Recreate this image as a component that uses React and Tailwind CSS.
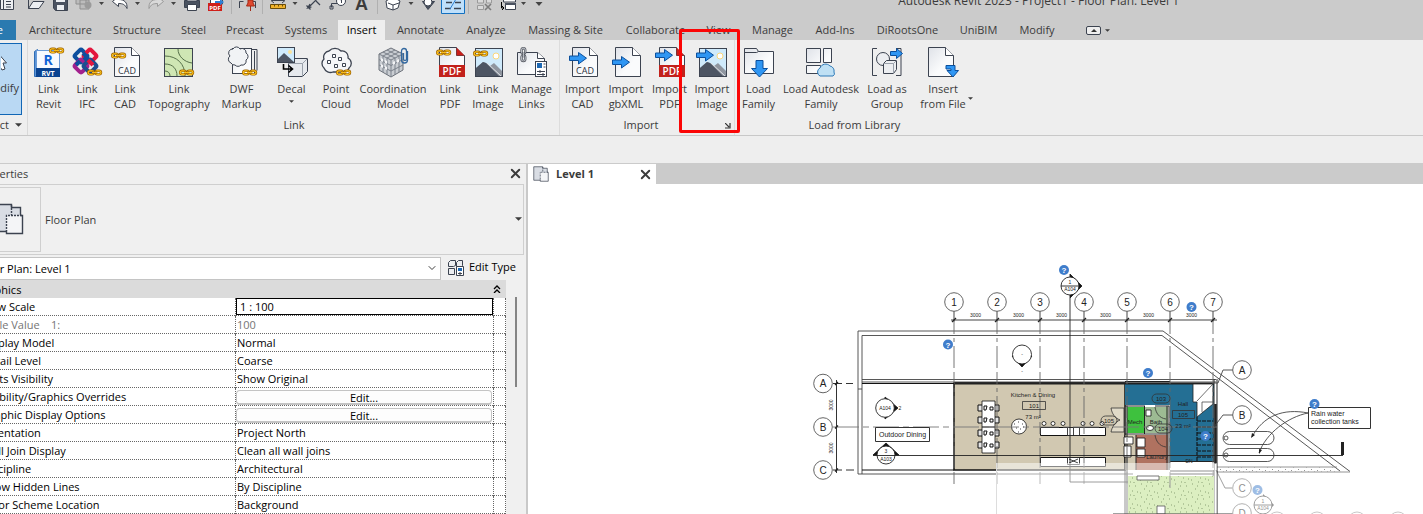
import { X, ChevronDown } from 'lucide-react'

const INK = '#3c4350'

function Caret({ className = 'w-[7px] h-1' }) {
  return (
    <svg viewBox="0 0 8 4" className={className} aria-hidden="true">
      <path d="M0 0h8L4 4z" fill="#3c3c3c" />
    </svg>
  )
}

function Chain({ x, y, dark }) {
  const outer = dark ? '#4b4f57' : '#9a5f00'
  const inner = dark ? '#b9bdc4' : '#fcc21b'
  return (
    <g transform={`translate(${x} ${y})`} fill="none">
      <rect x="1.2" y="1.8" width="5.6" height="3.6" rx="1.8" stroke={outer} strokeWidth="2.4" />
      <rect x="8.4" y="1.8" width="5.6" height="3.6" rx="1.8" stroke={outer} strokeWidth="2.4" />
      <rect x="1.2" y="1.8" width="5.6" height="3.6" rx="1.8" stroke={inner} strokeWidth="1.2" />
      <rect x="8.4" y="1.8" width="5.6" height="3.6" rx="1.8" stroke={inner} strokeWidth="1.2" />
      <path d="M5 3.6h5.2" stroke={outer} strokeWidth="2.4" />
      <path d="M5 3.6h5.2" stroke={inner} strokeWidth="1.1" />
    </g>
  )
}

function Arrow({ x, y }) {
  return (
    <path
      transform={`translate(${x} ${y})`}
      d="M.5 4h9V.5l8 5.7-8 5.8V8.5h-9z"
      fill="#2f96f3"
      stroke="#0b4f9c"
      strokeWidth="1"
    />
  )
}

function Sheet({ children }) {
  return (
    <>
      <path d="M5.5 1.5h17l8 8v21h-25z" fill="url(#paper)" stroke={INK} />
      <path d="M22.5 1.5v8h8" fill="#fff" stroke={INK} />
      {children}
    </>
  )
}

function Tag({ children, x = 18, y = 27.5, size = 9, fill = '#2b313c', weight = 'normal' }) {
  return (
    <text x={x} y={y} fontSize={size} fill={fill} fontWeight={weight} textAnchor="middle" fontFamily="Open Sans, sans-serif">
      {children}
    </text>
  )
}

function Photo() {
  return (
    <>
      <rect x="3.5" y="2.5" width="27" height="28" fill="#cfeafb" stroke={INK} />
      <circle cx="24" cy="10" r="3" fill="#fff" stroke="#fbd77c" />
      <path d="M4 22l7-6 3 1 4 3 4-3 8 8v5H4z" fill="#8f959f" />
      <path d="M4 22l7-6 3 1 13 13H4z" fill="#4d5563" />
      <path d="M15 17l14 13" stroke="#dfe2e6" />
    </>
  )
}

function PdfSheet() {
  return (
    <Sheet>
      <path d="M22.5 1.5l8 8h-8z" fill="#c9201a" />
      <rect x="5" y="19" width="26" height="12" fill="#c2211b" />
      <Tag y="28.5" size="10" fill="#fff" weight="600">PDF</Tag>
    </Sheet>
  )
}

const icons = {
  revit: (
    <>
      <path d="M1.5 5.5l3-2v27h-3z" fill="#5c95d8" stroke="#2f6cb5" />
      <rect x="3.5" y="4.5" width="23" height="20" fill="#f7faff" stroke="#6c9bd6" />
      <Tag x="15" y="19" size="14" fill="#0f62d6" weight="bold">R</Tag>
      <rect x="3" y="22" width="24" height="9" fill="#0a4391" />
      <Tag x="15" y="29.5" size="7" fill="#fff" weight="bold">RVT</Tag>
      <Chain x="16" y="1" />
    </>
  ),
  ifc: (
    <>
      <g fill="none" strokeWidth="4">
        <rect x="5" y="5" width="10" height="10" rx="2" transform="rotate(45 10 10)" stroke="#0d4f9e" />
        <rect x="14" y="5" width="10" height="10" rx="2" transform="rotate(45 19 10)" stroke="#e3173e" />
        <rect x="5" y="15" width="10" height="10" rx="2" transform="rotate(45 10 20)" stroke="#a3218e" />
        <rect x="14" y="15" width="10" height="10" rx="2" transform="rotate(45 19 20)" stroke="#1d4d8f" />
        <path d="M12 7l4 4M13 14l4-4M5 19l4-4" stroke="#0d4f9e" />
        <path d="M17 14l5 5" stroke="#e3173e" />
      </g>
      <Chain x="16" y="23" />
    </>
  ),
  cadLink: (
    <>
      <Sheet><Tag>CAD</Tag></Sheet>
      <Chain x="2" y="6" />
    </>
  ),
  topo: (
    <>
      <rect x="1.5" y="2.5" width="28" height="28" fill="#cfe6b4" stroke={INK} />
      <path d="M2 10c12 0 20 8 20 20M2 18c8 0 12 5 12 12M2 25c3 0 5 2 5 5M15 3c0 7 6 13 14 14" fill="none" stroke="#56704a" />
      <Chain x="16" y="23" />
    </>
  ),
  dwf: (
    <>
      <path d="M28.5 5v22M26 3.5h5v21" fill="none" stroke={INK} />
      <rect x="6.5" y="2.5" width="19" height="25" fill="url(#paper)" stroke={INK} />
      <path d="M5 17a4 4 0 0 1-1-7 4 4 0 0 1 3-7 4 4 0 0 1 7 0 4 4 0 0 1 6 4 4 4 0 0 1 0 7 4 4 0 0 1-5 5 4 4 0 0 1-6 0 4 4 0 0 1-4-2z" fill="#f1f3f5" stroke={INK} />
      <Chain x="16" y="23" />
    </>
  ),
  decal: (
    <>
      <path d="M12.5 17.5l5-5h14v13l-5 5h-14z" fill="#e6e9ed" stroke={INK} />
      <path d="M12.5 17.5h14v13M26.5 17.5l5-5" fill="none" stroke="#9aa1ab" />
      <rect x="1.5" y="1.5" width="17" height="15" fill="#cfeafb" stroke={INK} />
      <path d="M2 13l6-6 10 9H2z" fill="#4d5563" />
      <circle cx="14" cy="6" r="2" fill="#fbe29a" />
      <path d="M7.5 18v5h8M12.5 19.5l4 3.5-4 3.5" fill="none" stroke="#000" strokeWidth="1.6" />
    </>
  ),
  point: (
    <>
      <path d="M4 22a6 6 0 0 1 0-9 6 6 0 0 1 5-8 8 8 0 0 1 12 0 6 6 0 0 1 7 7 6 6 0 0 1 1 10 6 6 0 0 1-6 4H13a7 7 0 0 1-9-4z" fill="#f5f6f8" stroke={INK} strokeWidth="1.3" />
      <path d="M12.5 8.5h3v3h-3zM18.5 11.5h3v3h-3zM7.5 14.5h3v3h-3zM14.5 18.5h3v3h-3zM22.5 17.5h3v3h-3z" fill="#fff" stroke={INK} />
      <Chain x="16" y="23" />
    </>
  ),
  coord: (
    <>
      <path d="M2 8l12-6 12 6v16l-12 7-12-7z" fill="#c9cdd2" stroke="#6b7079" />
      <path d="M2 8l12 6 12-6M14 14v17M2 13.5l12 6 12-6M2 19l12 6 12-6M6 10v16M10 12v17M18 12v17M22 10v16M6 6l12 6M10 4l12 6M22 6l-12 6M18 4L6 10" fill="none" stroke="#7b818b" />
      <path d="M4 12l2 1v3l-2-1zM8 14l2 1v3l-2-1zM16 16l2-1v3l-2 1zM20 14l2-1v3l-2 1zM4 18l2 1v3l-2-1zM8 20l2 1v3l-2-1z" fill="#f3f4f6" />
      <path d="M30.5 5v9a3 3 0 0 1-6 0V5a2.5 2.5 0 0 1 5 0v8a1.4 1.4 0 0 1-3 0V7" fill="none" stroke="#33689f" strokeWidth="1.3" />
    </>
  ),
  pdfLink: (
    <>
      <PdfSheet />
      <Chain x="2" y="3" />
    </>
  ),
  imageLink: (
    <>
      <Photo />
      <Chain x="1" y="4" />
    </>
  ),
  manage: (
    <>
      <path d="M1.5 6.5h20l7 6v16h-27z" fill="url(#paper)" stroke={INK} />
      <path d="M21.5 6.5v6h7" fill="#fff" stroke={INK} />
      <rect x="19.5" y="15.5" width="11" height="15" fill="#fff" stroke={INK} />
      <rect x="21" y="17" width="5" height="5" fill="#1d68b3" />
      <path d="M27.5 18h2M27.5 21h2M21 25.5h8M21 28.5h8M24 24v3M27 27v3" stroke={INK} />
      <g transform="rotate(90 8 8)"><Chain x="1" y="5" dark /></g>
    </>
  ),
  cadImport: (
    <>
      <Sheet><Tag>CAD</Tag></Sheet>
      <Arrow x="2" y="6" />
    </>
  ),
  gbxml: (
    <>
      <Sheet />
      <Arrow x="2" y="10" />
    </>
  ),
  pdfImport: (
    <>
      <PdfSheet />
      <Arrow x="1" y="3" />
    </>
  ),
  imageImport: (
    <>
      <Photo />
      <Arrow x="0" y="3" />
    </>
  ),
  loadFamily: (
    <>
      <path d="M1.5 27.5v-25h12l2 3h15v22z" fill="url(#paper)" stroke={INK} />
      <path d="M1.5 6.5h12l2-1" fill="none" stroke={INK} />
      <path d="M13 14.5h7v8h4.5L16.5 31l-8-8.5H13z" fill="#2f96f3" stroke="#0b4f9c" />
    </>
  ),
  autodesk: (
    <>
      <path d="M1.5 2.5h14v14h-14zM18.5 2.5h8v14h-8zM1.5 19.5h14v8h-14z" fill="url(#paper)" stroke={INK} />
      <path d="M15 30a4.5 4.5 0 0 1 0-8 6 6 0 0 1 10-2 5 5 0 0 1 4 6 3 3 0 0 1-1 4z" fill="#bfe0f4" stroke="#2e7ab8" />
    </>
  ),
  group: (
    <>
      <path d="M6 2.5H1.5v27H6M25 2.5h5v27h-5" fill="none" stroke={INK} />
      <circle cx="12" cy="13" r="6.5" fill="#eceef1" stroke={INK} />
      <path d="M12.5 17.5l3-3h10v9l-3 4h-10z" fill="#eceef1" stroke={INK} />
      <path d="M12.5 17.5h10v10M22.5 17.5l3-3" fill="none" stroke="#9aa1ab" />
      <path d="M19.5 5.5h6v-3l6 5-6 5v-3h-6z" fill="#2f96f3" stroke="#0b4f9c" />
    </>
  ),
  insert: (
    <>
      <path d="M1.5 1.5h17l8 8v21h-25z" fill="url(#paper)" stroke={INK} />
      <path d="M18.5 1.5v8h8" fill="#fff" stroke={INK} />
      <path d="M19 19.5h9v5h3.5L26 31l-6-6.5h4V23h-5z" fill="#2f96f3" stroke="#0b4f9c" />
    </>
  ),
}

const panels = [
  {
    title: 'Link',
    items: [
      ['revit', 'Link', 'Revit', 'w-[39px]'],
      ['ifc', 'Link', 'IFC', 'w-[38px]'],
      ['cadLink', 'Link', 'CAD', 'w-[38px]'],
      ['topo', 'Link', 'Topography', 'w-[70px]'],
      ['dwf', 'DWF', 'Markup', 'w-[55px]'],
      ['decal', 'Decal', '', 'w-[45px]'],
      ['point', 'Point', 'Cloud', 'w-[44px]'],
      ['coord', 'Coordination', 'Model', 'w-[70px]'],
      ['pdfLink', 'Link', 'PDF', 'w-[44px]'],
      ['imageLink', 'Link', 'Image', 'w-[32px]'],
      ['manage', 'Manage', 'Links', 'w-[55px]'],
    ],
  },
  {
    title: 'Import',
    launcher: true,
    items: [
      ['cadImport', 'Import', 'CAD', 'w-[43px]'],
      ['gbxml', 'Import', 'gbXML', 'w-[44px]'],
      ['pdfImport', 'Import', 'PDF', 'w-[43px]'],
      ['imageImport', 'Import', 'Image', 'w-[42px]', true],
    ],
  },
  {
    title: 'Load from Library',
    items: [
      ['loadFamily', 'Load', 'Family', 'w-[45px]'],
      ['autodesk', 'Load Autodesk', 'Family', 'w-[80px]'],
      ['group', 'Load as', 'Group', 'w-[52px]'],
      ['insert', 'Insert', 'from File', 'w-[60px]'],
    ],
  },
]

const tabs = [
  ['Architecture', 'w-[85px]'],
  ['Structure', 'w-[68px]'],
  ['Steel', 'w-[45px]'],
  ['Precast', 'w-[58px]'],
  ['Systems', 'w-[64px]'],
  ['Insert', 'w-[47px]'],
  ['Annotate', 'w-[71px]'],
  ['Analyze', 'w-[60px]'],
  ['Massing & Site', 'w-[99px]'],
  ['Collaborate', 'w-[81px]'],
  ['View', 'w-[45px]'],
  ['Manage', 'w-[63px]'],
  ['Add-Ins', 'w-[62px]'],
  ['DiRootsOne', 'w-[83px]'],
  ['UniBIM', 'w-[59px]'],
  ['Modify', 'w-[58px]'],
]

// Lower part of the quick access icons, drawn in one 545 x 14 strip
function QuickAccess() {
  return (
    <svg viewBox="0 0 545 14" className="h-[14px] w-[545px] shrink-0" role="img" aria-label="Quick access tools">
      <g fill="#eceef1" stroke={INK}>
        <path d="M.5-2v11.5h13V-2zM3.5-2V9M6 1.5h5M6 4.5h5M6 7h5" />
        <path d="M28.5 8.5V-2M28.5 8.5L33 1.5h11l-5 7z" />
        <path d="M53.5-2v10l2 2.5h12V-2z" fill="#4a5260" />
        <path d="M56-2v4h9v-4zM57 5h7v5h-7z" stroke="none" />
        <path d="M112.5 1.5l6-5v3c6 0 9 3 8.5 9-2-4-4-5-8.5-5v3z" fill="#fff" />
        <path d="M163.5 1.5l-6-5v3c-6 0-9 3-8.5 9 2-4 4-5 8.5-5v3z" fill="#d9d9d9" stroke="#9a9a9a" />
        <path d="M184.5 7.5v-7h15v7z" fill="#4a5260" />
        <path d="M187.5 4.5h9v6h-9zM187-2h10v3h-10z" fill="#fff" />
        <path d="M210.5-2v6h12V-2z" fill="#fff" />
      </g>
      <path d="M76-2h10v6H76zM80 0h9v9h-9z" fill="#bcbcbc" stroke="#8f8f8f" />
      <circle cx="88" cy="5" r="3.5" fill="#9b9b9b" />
      <rect x="208" y="3" width="14" height="8" fill="#cf1f19" />
      <text x="215" y="9.5" fontSize="6" fontWeight="bold" fill="#fff" textAnchor="middle" fontFamily="Open Sans, sans-serif">PDF</text>
      <path d="M215 1h5v-2l4 3-4 3.5V3h-5z" fill="#2f80d3" />
      <path d="M231.5 0v14M262.5 0v14M377.5 0v14M468.5 0v14" stroke="#b0b0b0" />
      <path d="M239.5 8V1.5h4M255.5 8V1.5h-4" fill="none" stroke={INK} />
      <path d="M248 0h5v3l1.5 3h-8l1.5-3zM250.5 6v5" fill="#e0492f" stroke="#a42a17" />
      <path d="M272 .5h12M274-2l-3 2.5 3 2.5M282-2l3 2.5L282 3" fill="none" stroke={INK} />
      <path d="M270.5 4.5h15v4h-15zM274.5 4.5v2M278.5 4.5v2M282.5 4.5v2" fill="#f0b32c" stroke="#6a4d0a" />
      <path d="M308 8L319-3M306.5 5.5l4 4M310 4l-2.5 4 4-1M316 1l4 4" fill="none" stroke={INK} strokeWidth="1.2" />
      <path d="M331.5 7.5V3.5h6M330 6h3v3h-3z" fill="none" stroke={INK} />
      <circle cx="341" cy="1" r="4.5" fill="#fff" stroke={INK} />
      <path d="M340 0l1.5-1v4" fill="none" stroke={INK} />
      <text x="361.5" y="10" fontSize="18" fontWeight="bold" fill="#3c3c3c" textAnchor="middle" fontFamily="Liberation Sans, sans-serif">A</text>
      <path d="M386 1l7-4 7 4-2 7-5 2-6-2z" fill="#fff" stroke={INK} />
      <path d="M388 3l5 2 6-2M393 5v5" fill="none" stroke={INK} />
      <path d="M422.5 1.5h12L428 9.5z" fill="#4a5260" stroke={INK} />
      <circle cx="428" cy="2" r="4" fill="#fff" stroke={INK} />
      <path d="M441.5-2h23v15.5h-23z" fill="#bfe0fb" stroke="#1370c0" />
      <path d="M446 2.5h6M455 2.5h6M445 8.5h6M454 8.5h7" stroke={INK} strokeWidth="1.5" />
      <path d="M456-1l-6 10" stroke="#2f80d3" />
      <path d="M477.5-2h6v5h-6zM486.5-2h5v5h-5zM477.5 5.5h6v4h-6z" fill="#d9d9d9" stroke="#9a9a9a" />
      <path d="M485 4l6 6M491 4l-6 6" stroke="#7c7c7c" strokeWidth="1.6" />
      <path d="M503.5-2h12v4h-12zM505.5 3.5h10v6h-10z" fill="#fff" stroke={INK} />
      <path d="M505 3h11v2h-11z" fill="#4a5260" />
      <path d="M501.5 2v6h2M502 6l2 2-2 2" fill="none" stroke="#000" />
      <path d="M99 2h5l-2.5 3zM135 2h5l-2.5 3zM171 2h5l-2.5 3zM292.5 2h5L295 5zM408.5 2h5L411 5zM521 2h5l-2.5 3zM535.5 2h7L539 6z" fill="#444" />
    </svg>
  )
}

function RibbonButton({ item }) {
  const [icon, line1, line2, width, marked] = item
  return (
    <button className={`relative flex h-[74px] ${width} flex-col items-center text-[11px] leading-[15px] whitespace-nowrap`}>
      <svg viewBox="0 0 32 32" className="mb-[3px] size-8 shrink-0" aria-hidden="true">
        {icons[icon]}
      </svg>
      <span>{line1}</span>
      {line2 ? <span>{line2}</span> : <Caret className="mt-1 h-[3px] w-[5px]" />}
      {icon === 'insert' && <Caret className="absolute right-0 bottom-5 h-[3px] w-[5px]" />}
      {marked && <span className="absolute -top-[17px] -left-3 z-10 h-[104px] w-[61px] rounded-xs border-3 border-[#fb0606]" />}
    </button>
  )
}

function Ribbon() {
  return (
    <header>
      <div className="flex h-5 items-start justify-between overflow-hidden">
        <QuickAccess />
        <div className="mr-[244px] -mt-2 text-[12px] leading-[18px] whitespace-nowrap">
          Autodesk Revit 2023 - Project1 - Floor Plan: Level 1
        </div>
      </div>
      <nav className="flex h-5 items-stretch text-[11px] leading-5">
        <button className="mr-0.5 flex w-4 justify-end overflow-hidden bg-[#2a7ab0] pr-[13px] text-white">File</button>
        {tabs.map(([name, width]) => (
          <button
            key={name}
            className={`${width} shrink-0 text-center whitespace-nowrap ${name === 'Insert' ? 'bg-[#eeeeee] text-black' : ''}`}
          >
            {name}
          </button>
        ))}
        <button aria-label="Minimize ribbon" className="ml-5 flex items-center gap-1">
          <span className="flex h-[9px] w-[15px] items-center justify-center rounded-xs border border-[#3c4350] bg-[#eeeeee]">
            <svg viewBox="0 0 6 3" className="h-[3px] w-1.5"><path d="M0 3h6L3 0z" fill="#333" /></svg>
          </span>
          <Caret className="h-[3px] w-[5px]" />
        </button>
      </nav>
      <div className="flex h-[95px] bg-[#eeeeee]">
        <div className="flex w-7 flex-col border-r border-[#d9d9d9] pt-[3px]">
          <button className="flex h-[72px] w-[22px] flex-col items-end overflow-hidden border border-l-0 border-[#1166b5] bg-[#b9d8f3] pr-0.5 text-[11px]">
            <svg viewBox="0 0 6 16" className="mt-3 mr-3 h-4 w-1.5 shrink-0"><path d="M-4-4L5.5 7H2l2 6-3 1-3-5z" fill="#fff" stroke={INK} /></svg>
            <span className="mt-2 leading-[15px]">Modify</span>
          </button>
          <div className="flex h-5 w-[22px] items-center justify-end gap-1.5 text-[11px]">
            <span>Select</span>
            <Caret className="h-1 w-[7px] shrink-0" />
          </div>
        </div>
        {panels.map((panel) => (
          <section key={panel.title} className="border-r border-[#dcdcdc] pt-1.5 pr-px pl-px last:border-r-0 first-of-type:pr-0">
            <div className="flex">
              {panel.items.map((item) => (
                <RibbonButton key={item[0]} item={item} />
              ))}
            </div>
            <div className="relative text-center text-[11px] leading-[10px]">
              <span className={panel.launcher ? 'mr-3' : ''}>{panel.title}</span>
              {panel.launcher && (
                <svg viewBox="0 0 6 6" className="absolute top-[3px] right-0.5 size-1.5">
                  <path d="M0 0l4 4M5 0v5H0" fill="none" stroke="#333" strokeWidth="1.2" />
                </svg>
              )}
            </div>
          </section>
        ))}
      </div>
      <div className="h-7 border-t border-[#c8c8c8] bg-[#eeeeee]" />
    </header>
  )
}

function FloorPlanIcon({ className }) {
  return (
    <svg viewBox="0 0 32 32" className={className} aria-hidden="true">
      <path d="M1.5 1.5h18v3h9v24h-27z" fill="#d9dde4" stroke={INK} strokeWidth="1.4" />
      <path d="M14.5 12.5h16v18h-16z" fill="#f4f5f7" />
      <path d="M28.5 12.5h2v18h-16v-3" fill="none" stroke={INK} strokeWidth="1.4" />
      <path d="M19.5 2v10M30 12.5H14.5V28" fill="none" stroke={INK} strokeWidth="1.4" strokeDasharray="2 1" />
    </svg>
  )
}

const properties = [
  ['View Scale', '1 : 100', 'input'],
  ['Scale Value    1:', '100', 'readonly'],
  ['Display Model', 'Normal'],
  ['Detail Level', 'Coarse'],
  ['Parts Visibility', 'Show Original'],
  ['Visibility/Graphics Overrides', 'Edit...', 'button'],
  ['Graphic Display Options', 'Edit...', 'button'],
  ['Orientation', 'Project North'],
  ['Wall Join Display', 'Clean all wall joins'],
  ['Discipline', 'Architectural'],
  ['Show Hidden Lines', 'By Discipline'],
  ['Color Scheme Location', 'Background'],
]

function PropertyValue({ label, value, kind }) {
  if (kind === 'input') {
    return <input aria-label={label} defaultValue={value} className="block h-[17px] w-full border border-black bg-white px-[3px]" />
  }
  if (kind === 'button') {
    return (
      <button aria-label={`${label} ${value}`} className="mt-px block h-[15px] w-[256px] rounded-sm border border-b-2 border-[#c4c4c4] bg-[#fdfdfd] text-center leading-[14px]">
        {value}
      </button>
    )
  }
  return <span className="block pl-px leading-[17px]">{value}</span>
}

function PropertiesPanel() {
  return (
    <aside className="w-[528px] shrink-0 overflow-hidden border-r-2 border-[#c9c9c9] bg-[#f0f0f0]">
      <div className="-ml-[26px] flex h-full flex-col">
        <div className="flex h-5 items-center justify-between pr-[3px] pl-px">
          <h2 className="text-[11px]">Properties</h2>
          <button aria-label="Close properties"><X size={15} strokeWidth={3} /></button>
        </div>
        <button className="mr-0.5 flex h-[72px] items-center border border-[#cfcfcf] p-0.5 pr-px text-[11px]">
          <span className="flex h-full w-[64px] items-center justify-end border border-[#cfcfcf] pr-4">
            <FloorPlanIcon className="size-8" />
          </span>
          <span className="ml-1 grow pt-[3px] text-left">Floor Plan</span>
          <Caret />
        </button>
        <div className="flex h-[25px] items-center pt-px text-black">
          <div className="relative">
            <select aria-label="View" className="h-[23px] w-[467px] appearance-none border border-[#c4c4c4] bg-white pl-[3px] text-[11px]">
              <option>Floor Plan: Level 1</option>
            </select>
            <ChevronDown size={12} strokeWidth={1.5} className="pointer-events-none absolute top-[7px] right-[3px]" />
          </div>
          <button className="ml-1.5 flex items-center gap-1 whitespace-nowrap">
            <svg viewBox="0 0 18 18" className="size-[18px]" aria-hidden="true">
              <path d="M1.5 3.5l2-2h5v5l-2 1h-5zM9.5 3.5l2-2h4v5l-1 1h-5zM1.5 9.5h6v6h-6z" fill="#eceef1" stroke={INK} />
              <path d="M9.5 7.5h7v9h-7z" fill="#fff" stroke={INK} />
              <path d="M11 9h4v3h-4z" fill="#1d68b3" />
              <path d="M11 14.5h4M13 13v3" stroke={INK} />
            </svg>
            <span className="text-[11px]">Edit Type</span>
          </button>
        </div>
        <div className="flex grow">
          <table className="w-[532px] table-fixed border-collapse self-start bg-white text-[11px] text-black">
            <colgroup>
              <col />
              <col className="w-[258px]" />
              <col className="w-3" />
            </colgroup>
            <thead>
              <tr className="h-[18px] bg-[#dbdbdb]">
                <th colSpan={2} className="p-0 pt-0.5 pl-0.5 text-left leading-4 font-normal">Graphics</th>
                <th className="p-0" aria-label="Collapse">
                  <svg viewBox="0 0 8 8" className="-ml-px size-2"><path d="M1 4l3-3 3 3M1 8l3-3 3 3" fill="none" stroke="#000" strokeWidth="1.3" /></svg>
                </th>
              </tr>
            </thead>
            <tbody>
              {properties.map(([label, value, kind]) => (
                <tr key={label} className={`h-[18px] border-b border-dotted border-[#666] ${kind === 'readonly' ? 'text-[#757575]' : ''}`}>
                  <td className="border-r border-dotted border-[#666] p-0 pl-2 leading-[17px] whitespace-pre">{label}</td>
                  <td className="border-r border-dotted border-[#666] p-0 leading-[17px]">
                    <PropertyValue label={label} value={value} kind={kind} />
                  </td>
                  <td className="border-r border-dotted border-[#666] p-0" />
                </tr>
              ))}
            </tbody>
          </table>
          <div className="mt-[17px] ml-[9px] h-[90px] w-0.5 bg-[#858585]" />
        </div>
      </div>
    </aside>
  )
}

function Bubble({ x, y, children }) {
  return (
    <g>
      <circle cx={x} cy={y} r="9.3" fill="#fff" stroke="#555" strokeWidth=".9" />
      <text x={x} y={y + 3.5} fontSize="10" textAnchor="middle">{children}</text>
    </g>
  )
}

function Help({ x, y }) {
  return (
    <g>
      <circle cx={x} cy={y} r="5" fill="#3f7dcb" />
      <text x={x} y={y + 3} fontSize="8" fontWeight="bold" fill="#fff" textAnchor="middle">?</text>
    </g>
  )
}

const gridX = [954, 997, 1040, 1084, 1127, 1170, 1213]
const rows = [['A', 383.5], ['B', 427], ['C', 470]]

function FloorPlan() {
  return (
    <svg viewBox="528 184 895 330" preserveAspectRatio="xMinYMin meet" className="h-full w-full" fontFamily="Liberation Sans, sans-serif" fill="#222">
      <defs>
        <pattern id="grass" width="17" height="13" patternUnits="userSpaceOnUse">
          <rect width="17" height="13" fill="#dcefc1" />
          <path d="M2 3h1M8 1h1M13 5h1M5 8h1M10 10h1M15 11h1M1 12h1M7 5h1M12 1v1" stroke="#8aa274" />
        </pattern>
        <pattern id="gravel" width="13" height="6" patternUnits="userSpaceOnUse">
          <path d="M1 4h1M4 2l1 1M8 4h1M11 1l1 1M6 5h1" stroke="#777" strokeWidth=".8" />
        </pattern>
      </defs>

      {/* site boundary */}
      <g fill="none" stroke="#444" strokeWidth=".9">
        <path d="M858 474V331h305l187 140.5" />
        <path d="M862 474V335.5h300L1340 471" />
        <path d="M862 379.5h354M862 382h354" />
        <path d="M858 389h4M858 474h275" />
      </g>
      <path d="M1217 467h117l7 5h-124z" fill="url(#gravel)" />
      <path d="M1217 467h120M1217 472h133" stroke="#888" strokeWidth=".9" />

      {/* rooms */}
      <path d="M954 383h171v87H954z" fill="#d1c8b1" stroke="#111" strokeWidth="1.5" />
      <path d="M1125 383h89v78h-44v-56h-45z" fill="#246f94" />
      <path d="M1127 407h17v26h-17z" fill="#3ec13e" />
      <path d="M1145 407h23v26h-23z" fill="#9dbb93" />
      <path d="M1136 435h32v35h-32z" fill="#b07260" />
      <path d="M1125 435h11v35h-11z" fill="#d1c8b1" />
      <g fill="none" stroke="#222">
        <path d="M1125 406h20M1125 434h43M1144.5 406v28M1136 435v35M1125 435v79M1127 406v108" />
        <path d="M1155 406h14v64M1167 406v64" />
        <path d="M1125 381.5h45M1170 461.5h44M1170 471h44M1170 474h44" />
        <path d="M954 383.5h260" strokeWidth="1.8" />
        <path d="M1214 379v135M1217 379v135" />
        <path d="M1215.5 404v60" strokeWidth="2.5" />
      </g>
      <path d="M1193 384h20v20l-16 13v-15h-4z" fill="#fff" stroke="#222" strokeWidth=".8" />
      <path d="M1197 401l16-17M1202 412v-10h11" fill="none" stroke="#333" strokeWidth=".7" />
      <path d="M1197 421h16M1197 427h16M1197 433h16M1197 439h16M1197 445h16M1197 451h16M1197 457h16M1197 417v44" stroke="#111" strokeWidth="1.1" strokeDasharray="4 1" />
      <path d="M1170 462h44v8h-44z" fill="#fff" />

      {/* doors */}
      <path d="M1124 408h-13c1 6 4 10 9 12-5 2-8 7-9 12h13z" fill="#e0dac8" stroke="#333" strokeWidth=".8" />
      <path d="M1155 407c1 6 4 11 11 12M1155 435c1 6 4 11 11 12" fill="none" stroke="#333" strokeWidth=".8" />

      {/* furniture */}
      <g stroke="#111" fill="#fff">
        {[408, 420, 433, 445].map((y) => (
          <path key={y} d={`M978 ${y - 3}h5v6h-5zM994 ${y - 3}h5v6h-5z`} fill="#e5e5e5" />
        ))}
        <path d="M982 401h13v52h-13z" strokeWidth=".8" />
        {[408, 420, 433, 445].map((y) => (
          <path key={y} d={`M984 ${y + 2}v-4h3l-1 4zM990 ${y + 2}v-3h3v3z`} />
        ))}
        <path d="M982 427h13" />
        <circle cx="1019" cy="426.5" r="7.5" strokeWidth=".8" />
        <path d="M1014 424h1M1018 422h1M1022 424h1M1016 428h1M1020 429h1M1023 427h1M1018 432h1" strokeWidth=".8" />
        {[1044, 1053, 1063, 1083, 1092, 1102].map((x) => (
          <circle key={x} cx={x} cy="423.5" r="2" strokeWidth=".8" />
        ))}
        <path d="M1040.5 427.5h65v8h-65zM1040.5 457.5h65v9h-65z" />
        <path d="M1067.5 427.5h12v8h-12zM1073.5 427.5v8M1067.5 457.5h12v7h-12zM1069 459l9 4M1078 459l-9 4" strokeWidth=".8" />
        <path d="M1124 437h9v7h-9zM1124 446h7v11h-7zM1137 438h8v9h-8zM1137 449h8v8h-8zM1146 410h5v6h-5z" strokeWidth=".8" />
        <ellipse cx="1150" cy="428" rx="3.5" ry="2.5" strokeWidth=".8" />
      </g>

      {/* column grid */}
      <path d="M951 320h266" stroke="#444" />
      {gridX.map((x, i) => (
        <g key={x}>
          <path d={`M${x} 311v11`} stroke="#444" />
          <path d={`M${x} 322v166`} stroke="#666" strokeWidth=".9" strokeDasharray="12 4 4 4 22 4" />
          <path d={`M${x - 2} 322l4-4`} stroke="#222" strokeWidth="1.3" />
          <Bubble x={x} y={302}>{i + 1}</Bubble>
          {i < 6 && <text x={x + 21.5} y="317" fontSize="5" textAnchor="middle">3000</text>}
        </g>
      ))}
      <path d="M836.5 380v93" stroke="#333" />
      <path d="M833 383.5h20M833 470h25" stroke="#333" strokeDasharray="9 4 8 4" />
      <path d="M862 383.5h92M862 470h92" stroke="#111" />
      <path d="M833 427h384" stroke="#777" strokeWidth=".9" strokeDasharray="26 4 6 4" />
      <path d="M835 385l3-3M835 428.5l3-3M835 471.5l3-3" stroke="#222" strokeWidth="1.3" />
      {rows.map(([name, y]) => <Bubble key={name} x={823} y={y}>{name}</Bubble>)}
      <text transform="translate(833 405) rotate(-90)" fontSize="5" textAnchor="middle">3000</text>
      <text transform="translate(833 448) rotate(-90)" fontSize="5" textAnchor="middle">3000</text>

      {/* sections and elevations */}
      <g stroke="#222" strokeWidth=".9" fill="#fff">
        <path d="M873 455.5h470M1070 298v184h67" fill="none" />
        <path d="M1070 274l12 12-12 12zM885 397l13 11-13 11zM873 455l13-12 13 12zM1012 356h20l-10 11z" fill="#111" />
        <circle cx="1070" cy="286" r="9" />
        <path d="M1061 286h18" />
        <circle cx="885" cy="408" r="9.3" />
        <circle cx="886" cy="455" r="9" />
        <path d="M877 455.5h18" />
        <circle cx="1022" cy="354.5" r="9.5" />
      </g>
      <path d="M1341 442h3v13h-3z" />
      <g fontSize="5" textAnchor="middle">
        <text x="1070" y="284">1</text>
        <text x="1070" y="291">A104</text>
        <text x="885" y="410">A104</text>
        <text x="900" y="410">2</text>
        <text x="886" y="453">3</text>
        <text x="886" y="461">A103</text>
        <text x="1022" y="356">-</text>
        <text x="1022" y="373">-</text>
        <text x="1189" y="463">DN</text>
      </g>

      {/* tanks and notes */}
      <g fill="none" stroke="#444" strokeWidth=".9">
        <rect x="1223" y="431.5" width="51" height="13" rx="6.5" />
        <rect x="1223" y="448.5" width="51" height="13" rx="6.5" />
        <circle cx="1226" cy="438" r="2" />
        <circle cx="1226" cy="455" r="2" />
        <path d="M1308 413c-25-5-45 3-56 24M1308 413c-20 4-42 20-49 40" />
        <path d="M1233 370h-10l-5 13h-4M1233 415h-10l-9 12" />
      </g>
      <path d="M1251 438l1-5 3 2zM1259 454l0-5 3 1z" />
      <path d="M1308.5 407.5h62v21h-62zM875.5 427.5h54v14h-54z" fill="#fff" stroke="#333" />
      <text x="1311" y="416" fontSize="7">Rain water</text>
      <text x="1311" y="424" fontSize="7">collection tanks</text>
      <text x="902.5" y="437" fontSize="7" textAnchor="middle">Outdoor Dining</text>

      {/* room tags */}
      <g fill="none" stroke="#333" strokeWidth=".8">
        <path d="M1022.5 401.5h23v8h-23zM1172.5 410.5h22v8h-22z" />
        <rect x="1152" y="394" width="18" height="9" rx="4.5" />
        <rect x="1155" y="424" width="17" height="9" rx="4.5" />
        <rect x="1101" y="416" width="16" height="9" rx="4.5" />
      </g>
      <g fontSize="6" textAnchor="middle">
        <text x="1033" y="397">Kitchen &amp; Dining</text>
        <text x="1034" y="408">101</text>
        <text x="1033" y="419">73 m²</text>
        <text x="1135" y="424">Mech</text>
        <text x="1156" y="424">Bath</text>
        <text x="1183" y="406">Hall</text>
        <text x="1183" y="417">105</text>
        <text x="1183" y="428">23 m²</text>
        <text x="1161" y="401">103</text>
        <text x="1163" y="431">104</text>
        <text x="1109" y="423">105</text>
        <text x="1157" y="459">Laundry</text>
      </g>
      <Bubble x={1242} y={370}>A</Bubble>
      <Bubble x={1242} y={415}>B</Bubble>
      <Help x={1064} y={270} />
      <Help x={948} y={344.5} />
      <Help x={1191.5} y={307} />
      <Help x={1148} y={373} />
      <Help x={1205.5} y={436} />
      <Help x={1314.5} y={404} />

      {/* faded sheet below */}
      <path d="M996 463h221v51H996z" fill="#fff" opacity=".5" />
      <path d="M1128 476h86v38h-86z" fill="url(#grass)" />
      <path d="M1137 476h22v4h-22zM1157 506h8v8h-8z" fill="#fff" stroke="#555" strokeWidth=".8" />
      <path d="M1170 476v12" stroke="#999" />
      <path d="M996.5 463v51" stroke="#ddd" />
      <g opacity=".5">
        <path d="M1232 488h-7l-9-18M1113 513.5h120" fill="none" stroke="#444" />
        <Bubble x={1242} y={488}>C</Bubble>
        <Bubble x={1242} y={513}>D</Bubble>
        <Help x={1257.5} y={490} />
        <path d="M1263 494l11 11-11 11z" />
        <circle cx="1263" cy="505" r="9" fill="#fff" stroke="#444" />
        <path d="M1254 505h18" stroke="#444" />
        <text x="1263" y="503" fontSize="5" textAnchor="middle">1</text>
        <text x="1263" y="510" fontSize="5" textAnchor="middle">A104</text>
        {[1277, 1317, 1357, 1398].map((x) => (
          <circle key={x} cx={x} cy="521" r="9" fill="none" stroke="#777" strokeWidth=".8" />
        ))}
      </g>
    </svg>
  )
}

export default function App() {
  return (
    <div className="flex h-screen flex-col overflow-hidden bg-[#cbcbcb] font-['Open_Sans','Noto_Sans',sans-serif] text-[#3b3b3b]">
      <svg className="absolute size-0" aria-hidden="true">
        <linearGradient id="paper" x1="0" y1="0" x2="1" y2="1">
          <stop offset="0" stopColor="#dfe2e8" />
          <stop offset=".6" stopColor="#fafbfc" />
        </linearGradient>
      </svg>
      <Ribbon />
      <div className="mt-px flex min-h-0 grow">
        <PropertiesPanel />
        <main className="flex min-w-0 grow flex-col">
          <div className="flex h-5 shrink-0">
            <div className="flex w-32 items-center bg-white pr-[3px] pl-[5px]">
              <FloorPlanIcon className="size-4" />
              <span className="ml-[7px] grow text-[11px] font-bold">Level 1</span>
              <button aria-label="Close Level 1"><X size={15} strokeWidth={3} /></button>
            </div>
          </div>
          <div className="min-h-0 grow bg-white">
            <FloorPlan />
          </div>
        </main>
      </div>
    </div>
  )
}
